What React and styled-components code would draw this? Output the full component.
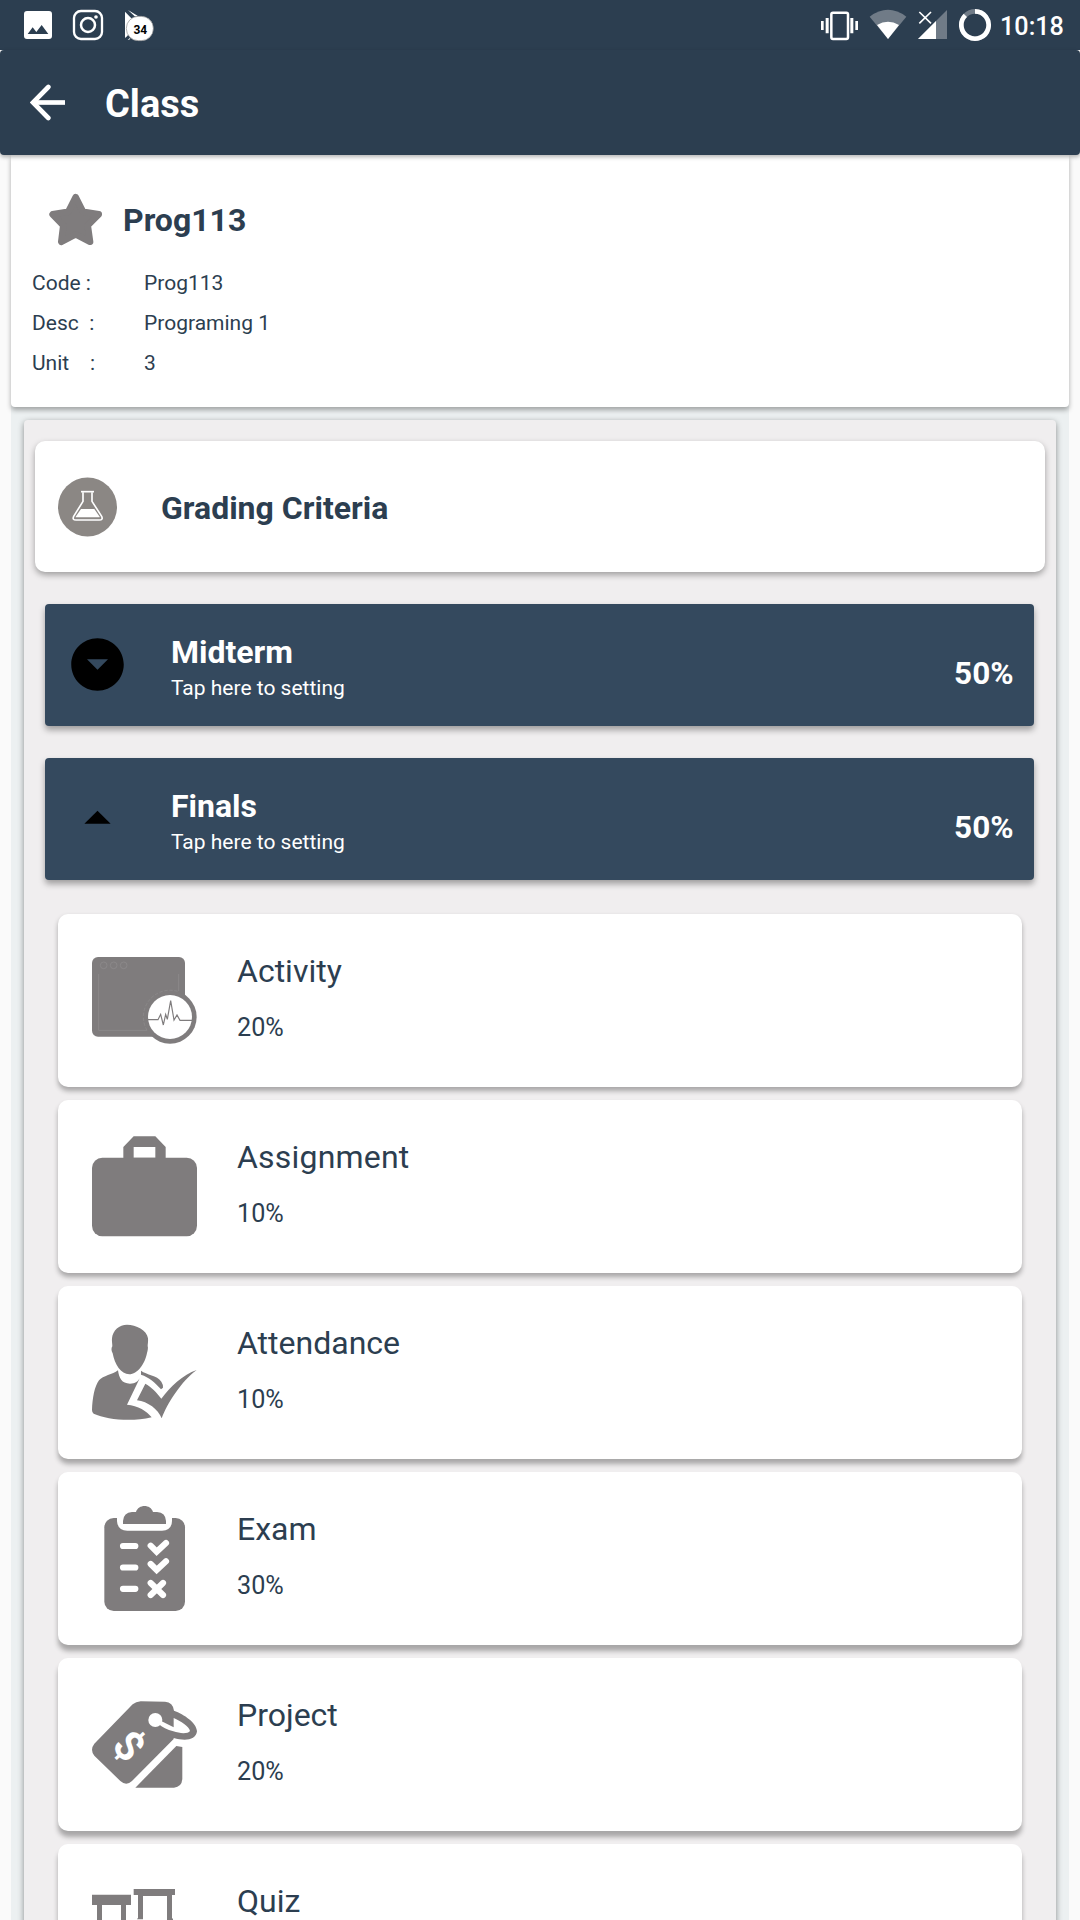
import React from "react";
import styled, { createGlobalStyle } from "styled-components";

const INK = "#2c3e50";
const GREY = "#7f7c7d";

const GlobalStyle = createGlobalStyle`
  * { box-sizing: border-box; }
  body {
    margin: 0;
    background: #fafafa;
    font-family: Roboto, "Liberation Sans", sans-serif;
    color: ${INK};
  }
`;

const Screen = styled.div`
  width: 1080px;
  height: 1920px;
  overflow: hidden;
  display: flex;
  flex-direction: column;
  background: #fafafa;
`;

const StatusBar = styled.div`
  flex: none;
  height: 50px;
  padding-left: 20px;
  display: flex;
  justify-content: space-between;
  background: ${INK};
`;

const StatusGroup = styled.div`
  display: flex;
  gap: ${(p) => p.$gap}px;
`;

const StatusIcon = styled.svg`
  flex: none;
  display: block;
  height: 50px;
  width: ${(p) => p.$w}px;
`;

const Clock = styled.span`
  width: 80px;
  margin-left: -2px;
  padding-top: 2px;
  font-size: 25.2px;
  font-weight: 500;
  line-height: 50px;
  color: #fff;
`;

const Header = styled.header`
  flex: none;
  height: 105px;
  padding-left: 30px;
  display: flex;
  align-items: center;
  gap: 39px;
  border-radius: 4px;
  background: ${INK};
  box-shadow: 0 2px 4px rgba(0, 0, 0, 0.3);
  z-index: 1;
`;

const BackIcon = styled.svg`
  width: 36px;
  height: 37px;
`;

const HeaderTitle = styled.h1`
  margin: 3px 0 0;
  font-size: 38px;
  font-weight: 700;
  line-height: 46px;
  color: #fff;
`;

const Body = styled.main`
  flex: none;
  width: 1058px;
  margin: 0 auto;
  background: #ecf0f1;
`;

const InfoCard = styled.section`
  height: 252px;
  padding: 38px 21px 0;
  border-radius: 0 0 4px 4px;
  background: #fff;
  box-shadow: 0 3px 5px rgba(0, 0, 0, 0.32);
`;

const InfoHead = styled.div`
  display: flex;
  align-items: center;
  gap: 20px;
  height: 54px;
  padding-left: 17px;
`;

const StarIcon = styled.svg`
  width: 54px;
  height: 54px;
`;

const CardTitle = styled.h2`
  margin: ${(p) => p.$drop || 0}px 0 0;
  font-size: 32px;
  font-weight: 700;
  line-height: 40px;
`;

const InfoRow = styled.div`
  display: grid;
  grid-template-columns: 112px 1fr;
  height: 40px;
  line-height: 40px;
  font-size: 21px;
  white-space: pre;
`;

const InfoRows = styled.div`
  margin-top: 16px;
`;

const Panel = styled.section`
  margin: 13px 13px 0;
  height: 1600px;
  padding: 21px 11px 0;
  display: flex;
  flex-direction: column;
  border-radius: 4px;
  background: #f0eeef;
  box-shadow: 0 2px 6px rgba(0, 0, 0, 0.42);
`;

const CriteriaCard = styled.div`
  flex: none;
  height: 131px;
  padding-left: 22px;
  display: flex;
  align-items: center;
  gap: 44px;
  border-radius: 10px;
  background: #fff;
  box-shadow: 0 3px 6px rgba(0, 0, 0, 0.34);
`;

const FlaskIcon = styled.svg`
  width: 60px;
  height: 60px;
`;

const TermBar = styled.div`
  flex: none;
  height: 122px;
  margin: 32px 11px 0 10px;
  padding: 29px 20.5px 0 21px;
  display: flex;
  border-radius: 4px;
  background: #34495e;
  color: #fff;
  box-shadow: 0 4px 6px rgba(0, 0, 0, 0.34);
`;

const TermIcon = styled.svg`
  width: 63px;
  height: 63px;
`;

const TermText = styled.div`
  flex: 1;
  margin-left: 42px;
`;

const TermName = styled.div`
  padding-bottom: 1px;
  font-size: 32px;
  font-weight: 700;
  line-height: 38px;
`;

const TermHint = styled.div`
  font-size: 21px;
  line-height: 33px;
`;

const TermWeight = styled.div`
  margin-top: 21px;
  font-size: 31.5px;
  font-weight: 700;
  line-height: 40px;
`;

const ItemList = styled.div`
  flex: none;
  margin: 34px 23px 0;
  display: flex;
  flex-direction: column;
  gap: 13px;
`;

const ItemCard = styled.div`
  flex: none;
  height: 173px;
  padding: 34px;
  display: flex;
  gap: 40px;
  border-radius: 10px;
  background: #fff;
  box-shadow: 0 ${(p) => p.$drop}px 5px rgba(0, 0, 0, 0.3);
`;

const ItemIcon = styled.svg`
  flex: none;
  width: 105px;
  height: 105px;
`;

const ItemName = styled.div`
  margin-top: 3px;
  font-size: 32px;
  line-height: 40px;
  letter-spacing: ${(p) => p.$track || 0}px;
`;

const ItemWeight = styled.div`
  margin-top: 22px;
  font-size: 25.2px;
  line-height: 30px;
`;

const ActivityArt = () => (
  <ItemIcon viewBox="276 654 315 315">
    <rect x="276" y="681" width="279" height="239" rx="18" fill={GREY} />
    <g fill="none" stroke="#918e8f" strokeWidth="2">
      <circle cx="311" cy="706" r="10" />
      <circle cx="341" cy="706" r="10" />
      <circle cx="371" cy="706" r="10" />
      <path d="M296 732V901H441M536 732V783" />
    </g>
    <circle cx="510" cy="861" r="80" fill={GREY} />
    <path d="M441 901A80 80 0 0 1 536 785" fill="none" stroke="#959293" strokeWidth="1.5" strokeDasharray="10 5" />
    <circle cx="510" cy="861" r="66" fill="#fff" />
    <path d="M443 869H474L482 853L490 885L497 853L502 868L512 812L522 870L531 855L540 871H577" fill="none" stroke={GREY} strokeWidth="3.5" />
  </ItemIcon>
);

const AssignmentArt = () => (
  <ItemIcon viewBox="126 132 315 315" fill={GREY}>
    <rect x="126" y="203" width="315" height="235.5" rx="31" />
    <path fillRule="evenodd" d="M220 206V171L251 139H316L347 171V206ZM251 171V203H316V171Z" />
  </ItemIcon>
);

const AttendanceArt = () => (
  <ItemIcon viewBox="126 120 315 315" fill={GREY}>
    <path d="M231 134C258 134 291 150 294 175C295 186 293 192 293 198C295 204 293 212 291 219C285 252 262 283 238 283C213 283 194 253 188 220C184 213 183 205 187 199C187 190 185 184 186 175C188 151 208 134 231 134Z" />
    <path d="M204 271C207 294 215 311 240 311C256 311 264 305 271 291L231 374C263 376 292 394 305 412C240 427 170 418 131 401Q126 398 126 390C127 355 134 318 147 301C159 287 188 284 204 271Z" />
    <path d="M273 272C290 285 321 285 334 305Q340 314 339 323L333 328C316 309 297 291 273 284Z" />
    <path d="M286 311L261 361C294 365 324 388 335 415C352 370 393 305 440 270C399 284 361 320 334 356C320 337 303 320 286 311Z" />
  </ItemIcon>
);

const ExamArt = () => (
  <ItemIcon viewBox="126 108 315 315">
    <rect x="163" y="144" width="242" height="279" rx="28" fill={GREY} />
    <path d="M201 142V153Q203 182 232 182H336Q365 181 366 153V142Z" fill="#fff" />
    <path d="M219 162V153Q221 127 246 126H258C265 102 302 102 309 126H321Q347 128 348 153V162Z" fill={GREY} />
    <g fill="none" stroke="#fff" strokeWidth="18.5" strokeLinecap="round">
      <path d="M219 228H256M219 292.5H256M219 356.5H256" />
      <path d="M302 227L320 245L348 219M302 282L320 300L348 274" />
      <path d="M302 339L339 375M339 339L302 375" />
    </g>
  </ItemIcon>
);

const ProjectArt = () => (
  <ItemIcon viewBox="126 96 315 315">
    <path
      d="M272 123.500L345 125Q369 127 372 152C402 163 440 188 441 214C438 242 403 243 371 234V237L246 363Q229 379 211 363L133 287Q119 269 133 251L248 133Q258 124 272 123.500Z"
      fill={GREY}
    />
    <circle cx="316" cy="180" r="21" fill="#fff" />
    <path d="M332 182L371 202V174C392 183 418 200 420 213C414 222 390 221 370 214C352 209 336 201 326 192Z" fill="#fff" />
    <path d="M379 258L397 261V357Q395 381 372 383H256Z" fill={GREY} />
    <text
      x="0"
      y="0"
      transform="translate(237 258) rotate(47) translate(0 43)"
      textAnchor="middle"
      fontFamily="Roboto, sans-serif"
      fontSize="124"
      fontWeight="700"
      fill="#fff"
    >
      $
    </text>
  </ItemIcon>
);

const QuizArt = () => (
  <ItemIcon viewBox="126 654 315 315" fill={GREY}>
    <path d="M126 704H243V735H228V860H213V735H156V860H141V735H126Z" />
    <path d="M251 687H375V705H366V773L369 778V860H351V708H279V778H261L264 773V705H251Z" />
  </ItemIcon>
);

const INFO = [
  ["Code :", "Prog113"],
  ["Desc  :", "Programing 1"],
  ["Unit    :", "3"],
];

const TERMS = [
  { name: "Midterm", weight: "50%", open: false },
  { name: "Finals", weight: "50%", open: true },
];

const ITEMS = [
  { name: "Activity", weight: "20%", Art: ActivityArt, drop: 3.5 },
  { name: "Assignment", weight: "10%", Art: AssignmentArt, drop: 4, track: 0.2 },
  { name: "Attendance", weight: "10%", Art: AttendanceArt, drop: 5 },
  { name: "Exam", weight: "30%", Art: ExamArt, drop: 5.5 },
  { name: "Project", weight: "20%", Art: ProjectArt, drop: 6 },
  { name: "Quiz", Art: QuizArt, drop: 6 },
];

function Status() {
  return (
    <StatusBar>
      <StatusGroup $gap={14}>
        <StatusIcon $w={36} viewBox="60 0 108 150">
          <path
            fillRule="evenodd"
            fill="#fff"
            d="M81 33H147Q156 33 156 42V108Q156 117 147 117H81Q72 117 72 108V42Q72 33 81 33ZM83 102H145L125 75L109 96L98 82Z"
          />
        </StatusIcon>
        <StatusIcon $w={36} viewBox="210 0 108 150">
          <rect x="222" y="33" width="84" height="84" rx="21" fill="none" stroke="#fff" strokeWidth="7" />
          <circle cx="264" cy="75" r="21" fill="none" stroke="#fff" strokeWidth="7.500" />
          <circle cx="288" cy="51" r="5.500" fill="#fff" />
        </StatusIcon>
        <StatusIcon $w={36} viewBox="360 0 108 150">
          <path d="M375 35L405 66L382 108L375 114ZM384 30L415 49H404ZM383 119L393 112L388 119Z" fill="#fff" />
          <rect x="379" y="49" width="81" height="73" rx="36" fill="#fff" stroke="#8b8b8b" strokeWidth="2" />
          <text x="421" y="101" textAnchor="middle" fontFamily="Roboto, sans-serif" fontSize="36" fontWeight="700" fill="#000">
            34
          </text>
        </StatusIcon>
      </StatusGroup>
      <StatusGroup $gap={10}>
        <StatusIcon $w={39} viewBox="120 0 117 150">
          <rect x="154" y="38" width="50" height="79" rx="5" fill="none" stroke="#fff" strokeWidth="7.500" />
          <path d="M123 63H131V90H123ZM137 54H146V100H137ZM211 54H220V100H211ZM226 63H234V90H226Z" fill="#fff" />
        </StatusIcon>
        <StatusIcon $w={38} viewBox="267 0 114 150">
          <path d="M269 50Q324 9 379 50L324 117Z" fill="#707b87" />
          <path d="M291 75Q324 55 357 75L324 117Z" fill="#fff" />
        </StatusIcon>
        <StatusIcon $w={31} viewBox="411 0 93 150">
          <path d="M414 117L501 30V117Z" fill="#707b87" />
          <path d="M414 117L468 63V117Z" fill="#fff" />
          <path d="M418 36L453 70M453 36L418 70" stroke="#fff" strokeWidth="5" />
        </StatusIcon>
        <StatusIcon $w={34} viewBox="534 0 102 150">
          <circle cx="585" cy="75" r="41" fill="none" stroke="#707b87" strokeWidth="14" />
          <path d="M585 34A41 41 0 1 1 556 46" fill="none" stroke="#fff" strokeWidth="14" />
        </StatusIcon>
        <Clock>10:18</Clock>
      </StatusGroup>
    </StatusBar>
  );
}

export default function App() {
  return (
    <Screen>
      <GlobalStyle />
      <Status />
      <Header>
        <BackIcon viewBox="90 252 108 111" fill="none" stroke="#fff" strokeWidth="14">
          <path d="M195 307.500H100" />
          <path d="M145 261L99 307.500L145 354" strokeLinecap="round" />
        </BackIcon>
        <HeaderTitle>Class</HeaderTitle>
      </Header>
      <Body>
        <InfoCard>
          <InfoHead>
            <StarIcon viewBox="147 69 162 162">
              <path
                d="M227 82L249 125L296 133L263 166L270 215L227 193L184 215L190 166L158 133L205 125Z"
                fill={GREY}
                stroke={GREY}
                strokeWidth="20"
                strokeLinejoin="round"
              />
            </StarIcon>
            <CardTitle>Prog113</CardTitle>
          </InfoHead>
          <InfoRows>
            {INFO.map(([label, value]) => (
              <InfoRow key={label}>
                <span>{label}</span>
                <span>{value}</span>
              </InfoRow>
            ))}
          </InfoRows>
        </InfoCard>
        <Panel>
          <CriteriaCard>
            <FlaskIcon viewBox="171 231 180 180">
              <circle cx="262.500" cy="321" r="88.500" fill="#8b8784" />
              <g fill="none" stroke="#fff" strokeWidth="5" strokeLinejoin="round">
                <path d="M243 275H282" />
                <path d="M249 277V304L221 349Q216 360 228 360H298Q310 360 305 349L276 304V277" />
              </g>
              <path d="M243 327H283L299 350Q300 352 297 352H229Q226 352 227 350Z" fill="#fff" />
            </FlaskIcon>
            <CardTitle $drop={2}>Grading Criteria</CardTitle>
          </CriteriaCard>
          {TERMS.map((t) => (
            <TermBar key={t.name}>
              <TermIcon viewBox="0 0 24 24">
                {t.open ? (
                  <path d="M7 14l5-5 5 5z" />
                ) : (
                  <path d="M12 2C6.480 2 2 6.480 2 12s4.480 10 10 10 10-4.480 10-10S17.520 2 12 2zm0 12l-4-4h8l-4 4z" />
                )}
              </TermIcon>
              <TermText>
                <TermName>{t.name}</TermName>
                <TermHint>Tap here to setting</TermHint>
              </TermText>
              <TermWeight>{t.weight}</TermWeight>
            </TermBar>
          ))}
          <ItemList>
            {ITEMS.map(({ name, weight, Art, drop, track }) => (
              <ItemCard key={name} $drop={drop}>
                <Art />
                <div>
                  <ItemName $track={track}>{name}</ItemName>
                  {weight && <ItemWeight>{weight}</ItemWeight>}
                </div>
              </ItemCard>
            ))}
          </ItemList>
        </Panel>
      </Body>
    </Screen>
  );
}
